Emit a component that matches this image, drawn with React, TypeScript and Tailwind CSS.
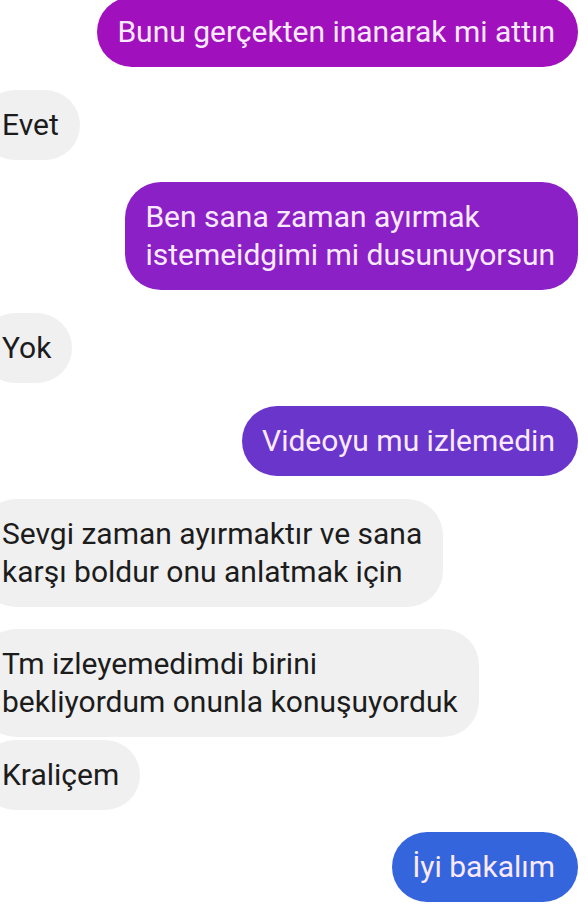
const messages: { from: "me" | "them"; lines: string[]; color?: string; gap: string }[] = [
  { from: "me", lines: ["Bunu gerçekten inanarak mi attın"], color: "bg-[#a010bd]", gap: "mt-[-3px]" },
  { from: "them", lines: ["Evet"], gap: "mt-[23px]" },
  { from: "me", lines: ["Ben sana zaman ayırmak", "istemeidgimi mi dusunuyorsun"], color: "bg-[#8a20c5]", gap: "mt-[22px]" },
  { from: "them", lines: ["Yok"], gap: "mt-[23px]" },
  { from: "me", lines: ["Videoyu mu izlemedin"], color: "bg-[#6935cb]", gap: "mt-[23px]" },
  { from: "them", lines: ["Sevgi zaman ayırmaktır ve sana", "karşı boldur onu anlatmak için"], gap: "mt-[23px]" },
  { from: "them", lines: ["Tm izleyemedimdi birini", "bekliyordum onunla konuşuyorduk"], gap: "mt-[22px]" },
  { from: "them", lines: ["Kraliçem"], gap: "mt-[3px]" },
  { from: "me", lines: ["İyi bakalım"], color: "bg-[#3465dc]", gap: "mt-[22px]" },
];

export default function App() {
  return (
    <div
      className="w-[588px] h-[916px] overflow-hidden bg-white flex flex-col"
      style={{ fontFamily: "Roboto, 'Noto Sans', sans-serif" }}
    >
      {messages.map((m, i) =>
        m.from === "me" ? (
          <div key={i} className={`flex justify-end pr-[10px] ${m.gap}`}>
            <div
              className={`${m.color} text-[#fbeaff] rounded-[36px] pl-[20px] pr-[23px] py-[16px] text-[30px] leading-[38px]`}
            >
              {m.lines.map((l, j) => (
                <div key={j}>{l}</div>
              ))}
            </div>
          </div>
        ) : (
          <div key={i} className={`flex justify-start ${m.gap}`}>
            <div className="bg-[#f0f0f0] text-[#1c1c1c] rounded-[36px] ml-[-20px] pl-[22px] pr-[21px] py-[16px] text-[30px] leading-[38px]">
              {m.lines.map((l, j) => (
                <div key={j}>{l}</div>
              ))}
            </div>
          </div>
        )
      )}
    </div>
  );
}
